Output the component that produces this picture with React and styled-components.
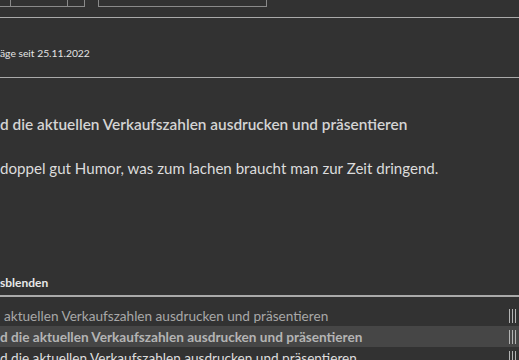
import styled, { createGlobalStyle } from 'styled-components';

const Global = createGlobalStyle`
  html, body {
    margin: 0;
    padding: 0;
    background: #323232;
  }
  body {
    width: 519px;
    height: 360px;
    overflow: hidden;
    font-family: Lato, 'Noto Sans', sans-serif;
    color: #d6d6d6;
  }
`;

const Page = styled.div`
  width: 519px;
  height: 360px;
  overflow: hidden;
  display: flex;
  flex-direction: column;
`;

const Toolbar = styled.div`
  height: 17px;
  flex-shrink: 0;
  display: flex;
  align-items: flex-end;
  gap: 13px;
  border-bottom: 1px solid #aaaaaa;
  > * {
    margin-bottom: 10px;
  }
`;

const Stepper = styled.div`
  display: flex;
  margin-left: -21px;
  height: 24px;
  border: 1px solid #8a8a8a;
  border-top: none;
`;

const StepButton = styled.div`
  width: ${(p) => p.$w}px;
  border-left: ${(p) => (p.$divider ? '1px solid #8a8a8a' : 'none')};
`;

const Field = styled.div`
  width: 167px;
  height: 24px;
  border: 1px solid #8a8a8a;
  border-top: none;
`;

const Meta = styled.div`
  height: 60px;
  flex-shrink: 0;
  display: flex;
  align-items: center;
  padding-top: 11px;
  box-sizing: border-box;
  font-size: 10.3px;
  color: #e4e4e4;
  border-bottom: 1px solid #aaaaaa;
`;

const Description = styled.div`
  height: 179px;
  flex-shrink: 0;
  box-sizing: border-box;
  padding-top: 37px;
  display: flex;
  flex-direction: column;
  gap: 25px;
  line-height: 19px;
`;

const Title = styled.div`
  white-space: nowrap;
  font-size: 15.4px;
  font-weight: 600;
  color: #d4d4d4;
`;

const Body = styled.div`
  white-space: nowrap;
  font-size: 15.1px;
  font-weight: 400;
  color: #dcdcdc;
`;

const ListHeader = styled.div`
  height: 40px;
  flex-shrink: 0;
  display: flex;
  align-items: flex-end;
  padding-bottom: 5px;
  box-sizing: border-box;
  font-size: 12px;
  font-weight: 700;
  color: #e8e8e8;
  border-bottom: 2px solid #aaaaaa;
`;

const List = styled.div`
  display: flex;
  flex-direction: column;
  padding-top: 8px;
`;

const Row = styled.div`
  height: 21px;
  flex-shrink: 0;
  display: flex;
  align-items: center;
  justify-content: space-between;
  padding-left: ${(p) => p.$indent || 0}px;
  padding-right: 3px;
  font-size: 13.6px;
  white-space: nowrap;
  font-weight: ${(p) => (p.$active ? 700 : 400)};
  color: ${(p) => (p.$active ? '#b4b4b4' : p.$bright ? '#dedede' : '#a8a8a8')};
  background: ${(p) => (p.$active ? '#464646' : 'transparent')};
`;

const Handle = styled.span`
  display: flex;
  gap: 2px;
  height: 14px;
  span {
    width: 1px;
    background: #b4b4b4;
  }
`;

const Grip = () => (
  <Handle>
    <span />
    <span />
    <span />
  </Handle>
);

const rows = [
  { text: 'aktuellen Verkaufszahlen ausdrucken und präsentieren', indent: 4 },
  { text: 'd die aktuellen Verkaufszahlen ausdrucken und präsentieren', active: true },
  { text: 'd die aktuellen Verkaufszahlen ausdrucken und präsentieren', bright: true },
];

export default function App() {
  return (
    <Page>
      <Global />
      <Toolbar>
        <Stepper>
          <StepButton $w={30} />
          <StepButton $w={56} $divider />
          <StepButton $w={16} $divider />
        </Stepper>
        <Field />
      </Toolbar>
      <Meta>äge seit 25.11.2022</Meta>
      <Description>
        <Title>d die aktuellen Verkaufszahlen ausdrucken und präsentieren</Title>
        <Body>doppel gut Humor, was zum lachen braucht man zur Zeit dringend.</Body>
      </Description>
      <ListHeader>sblenden</ListHeader>
      <List>
        {rows.map((r, i) => (
          <Row key={i} $active={r.active} $bright={r.bright} $indent={r.indent}>
            <span>{r.text}</span>
            <Grip />
          </Row>
        ))}
      </List>
    </Page>
  );
}
